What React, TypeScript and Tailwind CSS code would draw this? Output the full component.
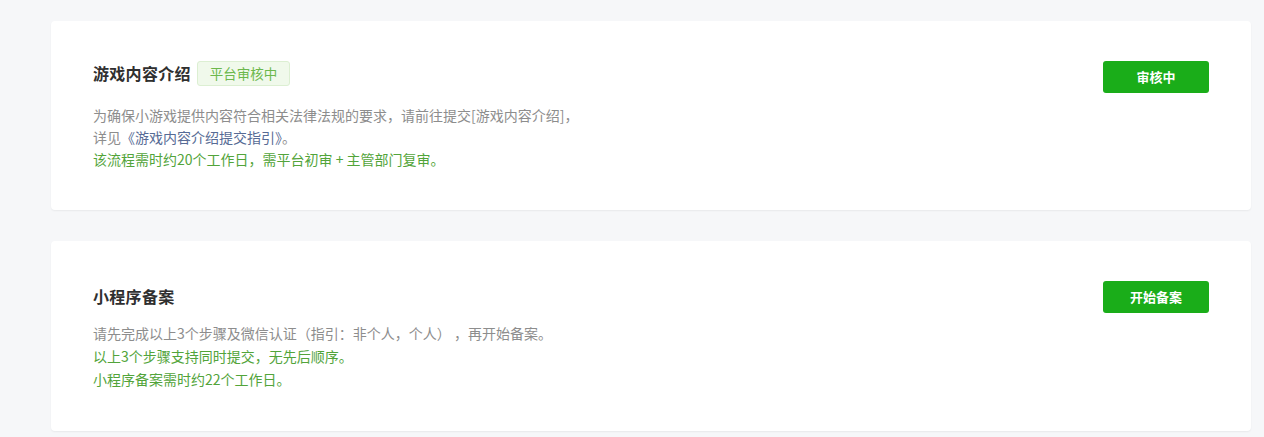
import React from "react";

const font = { fontFamily: '"Noto Sans CJK SC", "Noto Sans", sans-serif' };

export default function App() {
  return (
    <div
      className="w-[1264px] h-[437px] bg-[#f6f7f9] pl-[51px] pt-[21px] flex flex-col gap-[31px] overflow-hidden"
      style={font}
    >
      <div className="w-[1200px] h-[189px] bg-white rounded-[4px] shadow-[0_1px_2px_rgba(0,0,0,0.06)] flex justify-between pl-[42px] pr-[42px] pt-[40px]">
        <div className="flex flex-col">
          <div className="flex items-center h-[25px] gap-[6px]">
            <span className="text-[16px] font-bold text-[#2f2f2f] leading-[25px] tracking-[0.3px]">游戏内容介绍</span>
            <span className="h-[25px] px-[12px] rounded-[3px] border border-[#dcefd2] bg-[#f0f9eb] text-[#6cb84c] text-[13.5px] leading-[23px]">
              平台审核中
            </span>
          </div>
          <div className="mt-[18px] text-[14px] leading-[22px] text-[#8d8d8d]">
            <p>为确保小游戏提供内容符合相关法律法规的要求，请前往提交[游戏内容介绍]，</p>
            <p>
              详见<span className="text-[#576b95]">《游戏内容介绍提交指引》</span>。
            </p>
            <p className="text-[#52a43a]">该流程需时约20个工作日，需平台初审 + 主管部门复审。</p>
          </div>
        </div>
        <button className="w-[106px] h-[32px] bg-[#1aad19] rounded-[3px] text-white text-[13px] font-bold">
          审核中
        </button>
      </div>

      <div className="w-[1200px] h-[190px] bg-white rounded-[4px] shadow-[0_1px_2px_rgba(0,0,0,0.06)] flex justify-between pl-[42px] pr-[42px] pt-[40px]">
        <div className="flex flex-col">
          <div className="flex items-center h-[31px]">
            <span className="text-[16px] font-bold text-[#2f2f2f] leading-[31px] tracking-[0.3px]">小程序备案</span>
          </div>
          <div className="mt-[10px] text-[14px] leading-[23px] text-[#8d8d8d]">
            <p>请先完成以上3个步骤及微信认证（指引：非个人，个人） ，再开始备案。</p>
            <p className="text-[#52a43a]">以上3个步骤支持同时提交，无先后顺序。</p>
            <p className="text-[#52a43a]">小程序备案需时约22个工作日。</p>
          </div>
        </div>
        <button className="w-[106px] h-[32px] bg-[#1aad19] rounded-[3px] text-white text-[13px] font-bold">
          开始备案
        </button>
      </div>
    </div>
  );
}
